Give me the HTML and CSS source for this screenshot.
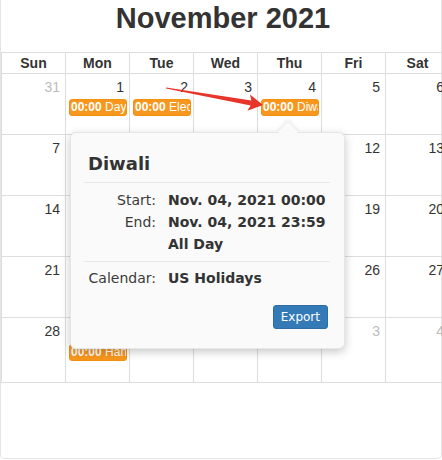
FILE: index.html
```html
<!DOCTYPE html>
<html>
<head>
<meta charset="utf-8">
<link rel="stylesheet" href="styles.css">
</head>
<body>
<div class="frame">
  <h2 class="title">November 2021</h2>
  <div class="grid">
    <div class="c h">Sun</div>
    <div class="c h">Mon</div>
    <div class="c h">Tue</div>
    <div class="c h">Wed</div>
    <div class="c h">Thu</div>
    <div class="c h">Fri</div>
    <div class="c h">Sat</div>

    <div class="c"><div class="num muted">31</div></div>
    <div class="c"><div class="num">1</div><div class="ev"><b>00:00</b> Day of the Dead</div></div>
    <div class="c"><div class="num">2</div><div class="ev"><b>00:00</b> Election Day</div></div>
    <div class="c"><div class="num">3</div></div>
    <div class="c"><div class="num">4</div><div class="ev"><b>00:00</b> Diwali</div></div>
    <div class="c"><div class="num">5</div></div>
    <div class="c"><div class="num">6</div></div>

    <div class="c"><div class="num">7</div></div>
    <div class="c"><div class="num">8</div></div>
    <div class="c"><div class="num">9</div></div>
    <div class="c"><div class="num">10</div></div>
    <div class="c"><div class="num">11</div></div>
    <div class="c"><div class="num">12</div></div>
    <div class="c"><div class="num">13</div></div>

    <div class="c"><div class="num">14</div></div>
    <div class="c"><div class="num">15</div></div>
    <div class="c"><div class="num">16</div></div>
    <div class="c"><div class="num">17</div></div>
    <div class="c"><div class="num">18</div></div>
    <div class="c"><div class="num">19</div></div>
    <div class="c"><div class="num">20</div></div>

    <div class="c"><div class="num">21</div></div>
    <div class="c"><div class="num">22</div></div>
    <div class="c"><div class="num">23</div></div>
    <div class="c"><div class="num">24</div></div>
    <div class="c"><div class="num">25</div></div>
    <div class="c"><div class="num">26</div></div>
    <div class="c"><div class="num">27</div></div>

    <div class="c"><div class="num">28</div></div>
    <div class="c"><div class="num">29</div><div class="ev ev-low"><b>00:00</b> Hanukkah</div></div>
    <div class="c"><div class="num">30</div></div>
    <div class="c"><div class="num muted">1</div></div>
    <div class="c"><div class="num muted">2</div></div>
    <div class="c"><div class="num muted">3</div></div>
    <div class="c"><div class="num muted">4</div></div>
  </div>
</div>

<svg class="annot" width="442" height="460" viewBox="0 0 442 460">
  <polygon fill="#e8352a" points="166.1,87.4 251.4,100.4 250,94.6 263,105 247.4,110.8 250.6,105.4 165.9,88.6"/>
</svg>

<div class="pop">
  <div class="pop-title">Diwali</div>
  <div class="dl sep">
    <span class="lbl">Start:</span><span class="val">Nov. 04, 2021 00:00</span>
    <span class="lbl">End:</span><span class="val">Nov. 04, 2021 23:59</span>
    <span class="lbl"></span><span class="val">All Day</span>
  </div>
  <div class="dl dl-cal">
    <span class="lbl">Calendar:</span><span class="val">US Holidays</span>
  </div>
  <div class="pop-foot"><span class="btn">Export</span></div>
</div>
</body>
</html>
```

FILE: styles.css
```css
body {
  margin: 0;
  width: 442px;
  height: 460px;
  overflow: hidden;
  position: relative;
  background: #fff;
  color: #333;
  font-family: "Liberation Sans", Arial, sans-serif;
}

.frame {
  box-sizing: border-box;
  width: 442px;
  height: 459px;
  border: 1px solid #e4e4e4;
  border-top: none;
  border-radius: 0 0 5px 5px;
}

.title {
  margin: 0;
  box-sizing: border-box;
  width: 444px;
  height: 52px;
  padding-top: 1px;
  font-size: 29px;
  line-height: 34px;
  font-weight: bold;
  text-align: center;
  color: #333;
}

.grid {
  display: grid;
  grid-template-columns: repeat(7, 64px);
  grid-template-rows: 21px repeat(4, 61px) 65px;
  width: max-content;
  border-top: 1px solid #ddd;
  border-left: 1px solid #ddd;
}

.c {
  box-sizing: border-box;
  min-width: 0;
  overflow: hidden;
  border-right: 1px solid #ddd;
  border-bottom: 1px solid #ddd;
}

.h {
  font-size: 14px;
  line-height: 20px;
  font-weight: bold;
  text-align: center;
}

.num {
  padding: 5px 5px 0 0;
  font-size: 14px;
  line-height: 16px;
  text-align: right;
}

.muted {
  color: #bbb;
}

.ev {
  margin: 4px 2px 0 3px;
  padding: 0 1px;
  background: #f8971d;
  border: 1px solid #f3900f;
  border-radius: 3px;
  color: #fff;
  font-size: 12px;
  line-height: 15px;
  white-space: nowrap;
  overflow: hidden;
}

.ev-low {
  margin-top: 5px;
}

.ev b {
  font-weight: bold;
}

.annot {
  position: absolute;
  left: 0;
  top: 0;
  pointer-events: none;
}

.pop {
  position: absolute;
  left: 70px;
  top: 132px;
  box-sizing: border-box;
  width: 275px;
  height: 217px;
  padding: 0 14px 0 13px;
  background: #fafafa;
  border: 1px solid rgba(0, 0, 0, 0.08);
  border-radius: 6px;
  box-shadow: 0 3px 10px rgba(0, 0, 0, 0.22);
  font-family: "DejaVu Sans", Verdana, sans-serif;
  color: #333;
}

.pop::before {
  content: "";
  position: absolute;
  left: 210px;
  top: -8px;
  width: 14px;
  height: 14px;
  background: #fafafa;
  transform: rotate(45deg);
  box-shadow: -2px -2px 4px rgba(0, 0, 0, 0.08);
}

.pop-title {
  position: relative;
  padding: 20px 0 7px 4px;
  font-size: 18px;
  line-height: 22px;
  font-weight: bold;
  border-bottom: 1px solid #e8e8e8;
}

.dl {
  display: grid;
  grid-template-columns: 72px auto;
  column-gap: 12px;
  font-size: 14px;
  line-height: 22px;
  padding: 6px 0;
}

.dl.sep {
  border-bottom: 1px solid #e8e8e8;
}

.dl-cal {
  padding: 5px 0 0;
}

.lbl {
  text-align: right;
  color: #3a3a3a;
}

.val {
  font-weight: bold;
  white-space: nowrap;
}

.pop-foot {
  margin-top: 16px;
  padding-right: 2px;
  text-align: right;
}

.btn {
  display: inline-block;
  padding: 3px 7px;
  font-size: 12px;
  line-height: 16px;
  color: #fff;
  background: #337ab7;
  border: 1px solid #2e6da4;
  border-radius: 3px;
}
```
